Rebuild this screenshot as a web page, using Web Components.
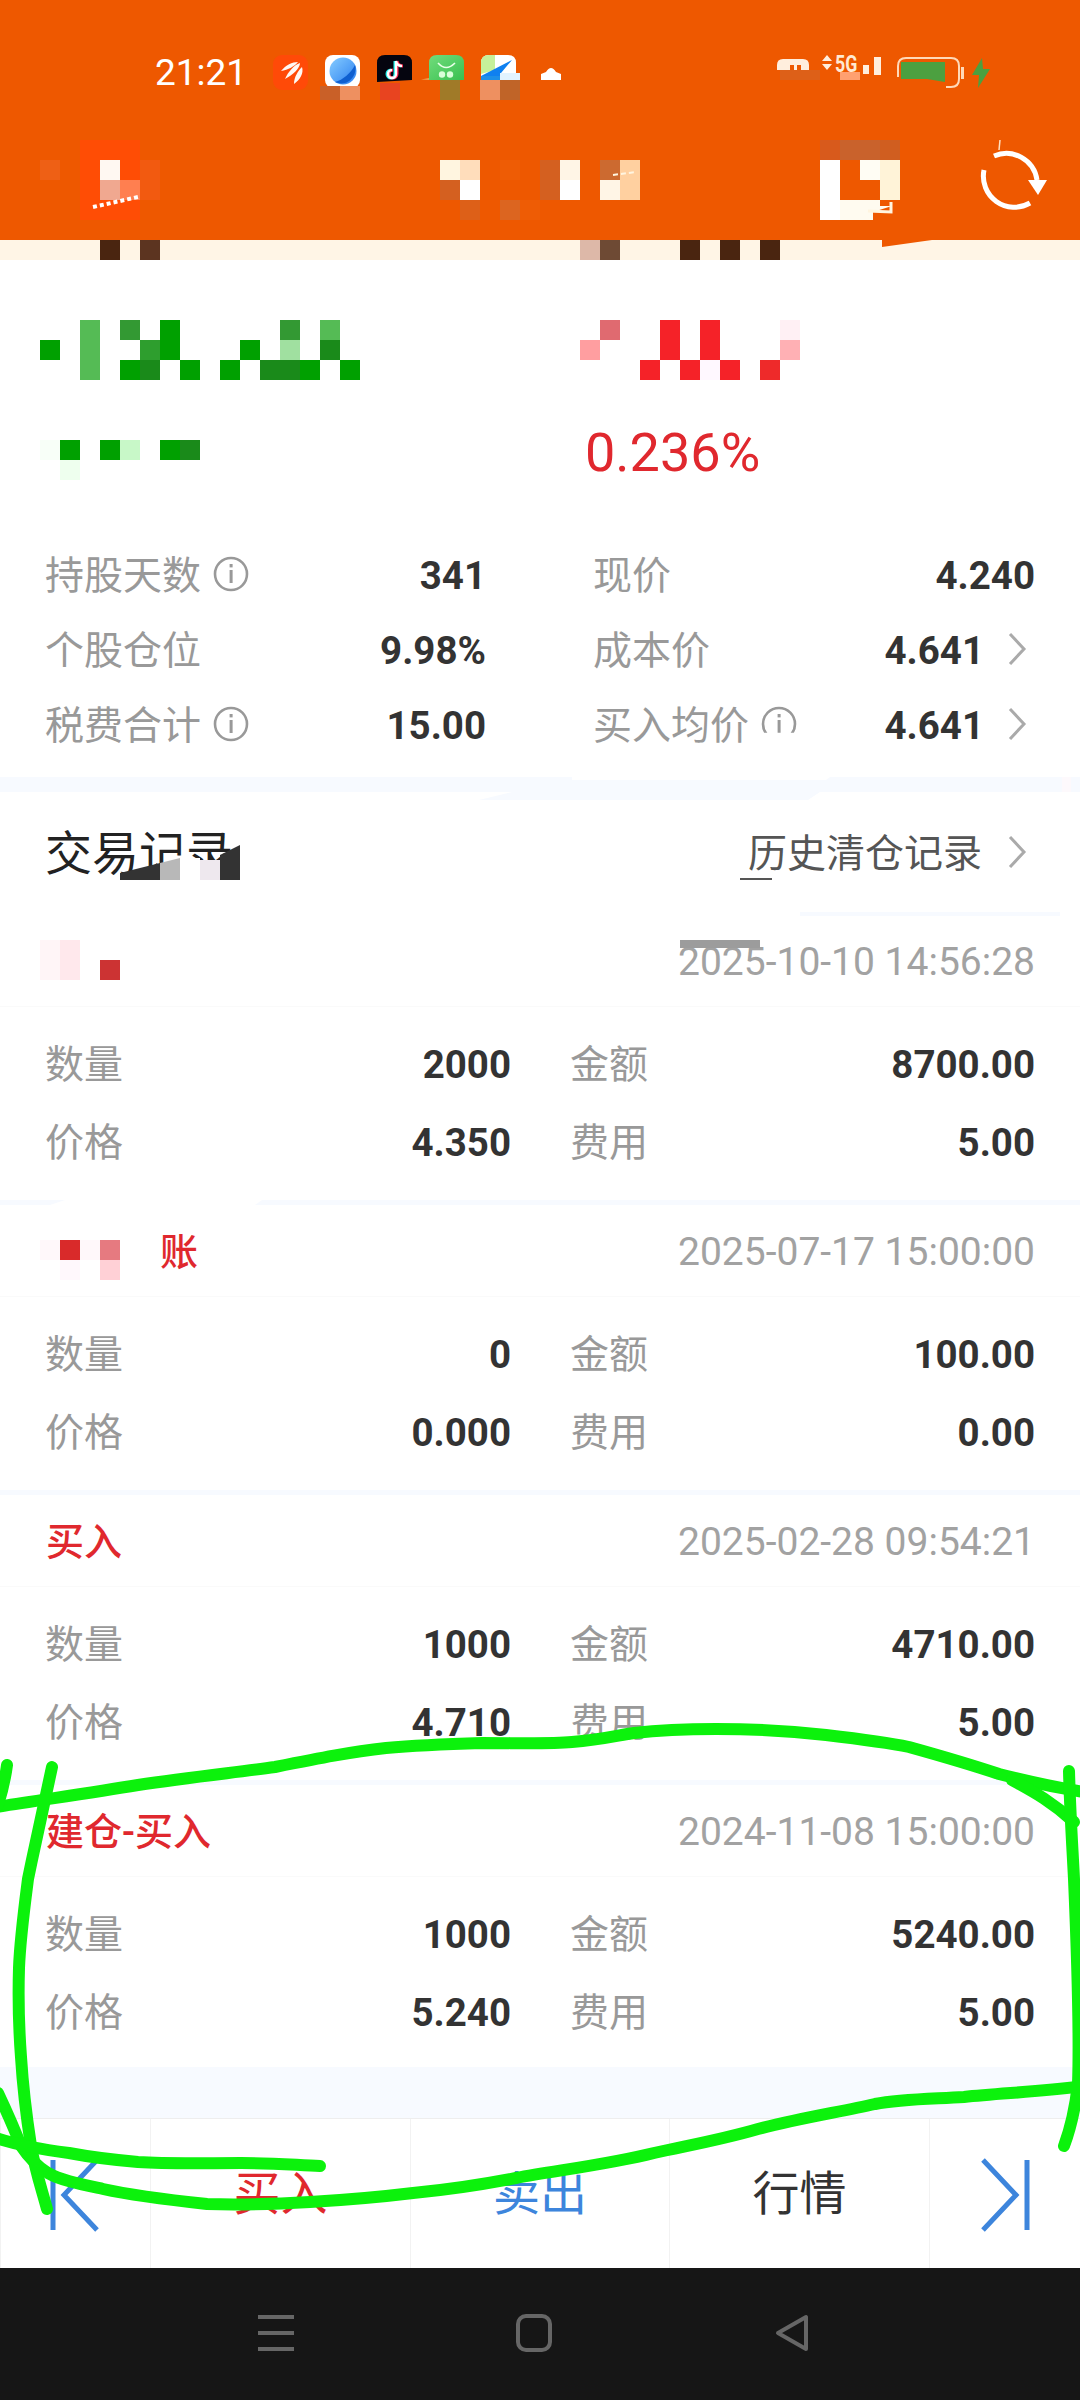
<!DOCTYPE html>
<html lang="zh-CN">
<head>
<meta charset="utf-8">
<title>持仓详情</title>
<style>
  html, body { margin: 0; padding: 0; }
  body {
    width: 1080px;
    height: 2400px;
    position: relative;
    overflow: hidden;
    display: flex;
    flex-direction: column;
    background: #f7faff;
    font-family: Roboto, "Noto Sans CJK SC", sans-serif;
  }
  .spacer { flex: 1; }
</style>
</head>
<body>
  <top-bar></top-bar>
  <holding-summary pct="0.236%">
    <stat-item label="持股天数" value="341" info></stat-item>
    <stat-item label="现价" value="4.240"></stat-item>
    <stat-item label="个股仓位" value="9.98%"></stat-item>
    <stat-item label="成本价" value="4.641" more></stat-item>
    <stat-item label="税费合计" value="15.00" info></stat-item>
    <stat-item label="买入均价" value="4.641" info="cut" more></stat-item>
  </holding-summary>
  <section-title link="历史清仓记录">交易记录</section-title>
  <trade-card date="2025-10-10 14:56:28" qty="2000" amount="8700.00" price="4.350" fee="5.00"></trade-card>
  <trade-card date="2025-07-17 15:00:00" qty="0" amount="100.00" price="0.000" fee="0.00" indent>账</trade-card>
  <trade-card date="2025-02-28 09:54:21" qty="1000" amount="4710.00" price="4.710" fee="5.00">买入</trade-card>
  <trade-card date="2024-11-08 15:00:00" qty="1000" amount="5240.00" price="5.240" fee="5.00" last>建仓-买入</trade-card>
  <div class="spacer"></div>
  <action-bar></action-bar>
  <system-nav></system-nav>
  <pixel-mosaic></pixel-mosaic>
  <pen-scribble></pen-scribble>

<script>
const CN = 'Roboto, "Noto Sans CJK SC", sans-serif';

class TopBar extends HTMLElement {
  constructor() {
    super();
    this.attachShadow({ mode: 'open' });
  }

  connectedCallback() {
    this.shadowRoot.innerHTML = `
      <style>
        :host { display: block; height: 260px; background: #fff5e6; flex: none; }
        .orange { height: 240px; background: #ee5800; display: flex; flex-direction: column; }
        .status { height: 140px; box-sizing: border-box; padding: 55px 90px 0 155px; display: flex; align-items: flex-start; }
        .time { width: 90px; margin-right: 28px; font: 400 37px/36px ${CN}; color: #fff; }
        .apps { display: flex; gap: 17px; align-items: flex-start; }
        .apps svg, .sys svg { display: block; flex: none; }
        .cloud { margin: 11px 0 0 8px; }
        .sys { margin-left: auto; display: flex; align-items: flex-start; }
        .five { display: block; font: 700 24px/18px ${CN}; color: #ffe9d2; width: 23px; margin: 0 5px 0 3px; transform: scaleX(.74); transform-origin: left; }
        .title { flex: 1; display: flex; justify-content: flex-end; padding-right: 23px; align-items: flex-start; }
      </style>
      <div class="orange">
        <div class="status">
          <div class="time">21:21</div>
          <div class="apps">
            <svg width="35" height="35" viewBox="0 0 35 35"><rect width="35" height="35" rx="9" fill="#ff4a08"/><path d="M8 16C13 10 19 7 25 7C22 11 15 15 8 16ZM12 24C15 17 21 10 27 8C27 13 20 20 12 24ZM21 29C21 22 25 16 29 12C31 18 27 25 21 29Z" fill="#fff8f4"/></svg>
            <svg width="35" height="33" viewBox="0 0 35 33"><defs><linearGradient id="pl" x1="0" y1="0" x2="1" y2="1"><stop offset="0" stop-color="#86ccff"/><stop offset="1" stop-color="#2a7ff0"/></linearGradient></defs><rect width="35" height="33" rx="8" fill="#fff"/><circle cx="18" cy="16" r="13.5" fill="url(#pl)"/><path d="M10 27C18 25 26 18 30 10C33 19 24 33 10 27Z" fill="#0f5fd0"/></svg>
            <svg width="35" height="27" viewBox="0 0 35 27"><path d="M8 0H27Q35 0 35 8V25L0 27V8Q0 0 8 0Z" fill="#05050f"/><path d="M19 6V19A4 4 0 1 1 15 15M19 6Q20 11 25 11" fill="none" stroke="#25f4ee" stroke-width="3" transform="translate(-1 0)"/><path d="M19 6V19A4 4 0 1 1 15 15M19 6Q20 11 25 11" fill="none" stroke="#fe2c55" stroke-width="3" transform="translate(1 0)"/><path d="M19 6V19A4 4 0 1 1 15 15M19 6Q20 11 25 11" fill="none" stroke="#fff" stroke-width="2.4"/></svg>
            <svg width="35" height="25" viewBox="0 0 35 25" style="overflow:visible"><defs><linearGradient id="gr" x1="0" y1="0" x2="1" y2="1"><stop offset="0" stop-color="#72dc7c"/><stop offset="1" stop-color="#38c050"/></linearGradient></defs><path d="M8 0H27Q35 0 35 8V25H0V8Q0 0 8 0Z" fill="url(#gr)"/><path d="M-8 24.6L0 23V25Z" fill="#f0a050"/><path d="M9 8Q17 17 26 8" fill="none" stroke="#e8ffe8" stroke-width="1.6"/><circle cx="13" cy="19.5" r="3.2" fill="#d8ffd8"/><circle cx="21" cy="19.5" r="3.2" fill="#d8ffd8"/></svg>
            <svg width="35" height="25" viewBox="0 0 35 25"><path d="M8 0H27Q35 0 35 8V25H0V8Q0 0 8 0Z" fill="#fff"/><path d="M0 8Q0 0 8 0H14V15L0 19Z" fill="#c6f09a"/><path d="M31 5L0 21V25H20V18Z" fill="#0f80f0"/><path d="M0 21H20V25H0Z" fill="#1c8fe8"/></svg>
            <svg class="cloud" width="20" height="14" viewBox="0 0 20 14"><path d="M0 14V8L5 6Q10 -2 15 6L20 8V14Z" fill="#fff"/></svg>
          </div>
          <div class="sys">
            <svg width="45" height="16" viewBox="0 0 45 16" style="margin-top:4px"><path d="M0 11V6Q0 0 6 0H26Q32 0 32 6V11H24V6H20V11H17V6H13V11Z" fill="#ffeedd"/></svg>
            <svg width="10" height="16" viewBox="0 0 10 16"><path d="M0 6L5 0L10 6ZM0 9H10L5 15Z" fill="#ffeedd"/></svg>
            <span class="five">5G</span>
            <svg width="34" height="20" viewBox="0 0 34 20" style="margin-top:2px"><rect y="8" width="6" height="9" fill="#ffeedd"/><rect x="11" width="7" height="18" fill="#ffeedd"/></svg>
            <svg width="75" height="32" viewBox="0 0 75 32" style="margin-top:2px"><path d="M1 20V9Q1 1 9 1H54Q62 1 62 9V22Q62 30 54 30H49" fill="none" stroke="#ffd9b8" stroke-width="2"/><path d="M4 5H48V25L30 22H4Z" fill="#4ca040"/><rect x="64" y="10" width="3" height="12" fill="#ffd9b8"/></svg>
            <svg width="18" height="30" viewBox="0 0 18 30" style="margin-top:3px"><path d="M10 0L0 17H7L6 30L18 11H11Z" fill="#4ca040"/></svg>
          </div>
        </div>
        <div class="title">
          <svg width="90" height="80" viewBox="0 0 90 80">
            <g fill="none" stroke="#fff" stroke-width="5">
              <path d="M27 16A31 31 0 0 1 70 40"/>
              <path d="M63 63A31 31 0 0 1 17 30"/>
            </g>
            <path d="M61 40H80L71 55Z" fill="#fff"/>
            <path d="M33 0L32 10" stroke="#ffe0c0" stroke-width="1.5"/>
          </svg>
        </div>
      </div>
    `;
  }
}

class HoldingSummary extends HTMLElement {
  constructor() {
    super();
    this.attachShadow({ mode: 'open' });
  }

  connectedCallback() {
    this.shadowRoot.innerHTML = `
      <style>
        :host { display: block; background: #fff; height: 517px; flex: none; border-bottom: 15px solid #f7faff; }
        .pct { height: 278px; box-sizing: border-box; padding: 163px 0 0 585px; font: 400 54px/60px ${CN}; color: #e0282e; }
        .grid { display: grid; grid-template-columns: 441px 442px; column-gap: 107px; padding: 0 45px; grid-auto-rows: 75px; }
      </style>
      <div class="pct">${this.getAttribute('pct')}</div>
      <div class="grid"><slot></slot></div>
    `;
  }
}

class StatItem extends HTMLElement {
  constructor() {
    super();
    this.attachShadow({ mode: 'open' });
  }

  connectedCallback() {
    const info = this.getAttribute('info');
    const cut = info === 'cut' ? 'clip-path: inset(0 0 24% 0);' : '';
    const infoIcon = info === null ? '' : `
      <svg class="info" style="${cut}" width="36" height="36" viewBox="0 0 36 36">
        <circle cx="18" cy="18" r="16" fill="none" stroke="#999" stroke-width="2.6"/>
        <rect x="16.6" y="8" width="3" height="3.4" fill="#999"/>
        <rect x="16.6" y="14" width="3" height="13" fill="#999"/>
      </svg>`;
    const more = this.hasAttribute('more') ? `
      <svg class="more" width="20" height="34" viewBox="0 0 20 34"><path d="M3 2L17 17L3 32" fill="none" stroke="#aaa" stroke-width="3"/></svg>` : '';
    this.shadowRoot.innerHTML = `
      <style>
        :host { display: flex; align-items: center; }
        .label { font: 400 39px/50px ${CN}; color: #999; }
        .info { margin-left: 12px; margin-top: -4px; }
        .value { margin-left: auto; font: 700 38.5px/50px ${CN}; color: #333; }
        .more { margin: -4px 8px 0 23px; }
      </style>
      <span class="label">${this.getAttribute('label')}</span>${infoIcon}
      <span class="value">${this.getAttribute('value')}</span>${more}
    `;
  }
}

class SectionTitle extends HTMLElement {
  constructor() {
    super();
    this.attachShadow({ mode: 'open' });
  }

  connectedCallback() {
    this.shadowRoot.innerHTML = `
      <style>
        :host { display: flex; align-items: center; flex: none; height: 123px; box-sizing: border-box; padding: 0 53px 0 45px; background: #fff; }
        .name { font: 400 47px/60px ${CN}; color: #222; }
        .link { margin-left: auto; font: 400 39px/50px ${CN}; color: #555; }
        svg { margin-left: 25px; margin-top: -4px; }
      </style>
      <span class="name"><slot></slot></span>
      <span class="link">${this.getAttribute('link')}</span>
      <svg width="20" height="34" viewBox="0 0 20 34"><path d="M3 2L17 17L3 32" fill="none" stroke="#aaa" stroke-width="3"/></svg>
    `;
  }
}

class TradeCard extends HTMLElement {
  constructor() {
    super();
    this.attachShadow({ mode: 'open' });
  }

  connectedCallback() {
    const attr = n => this.getAttribute(n);
    const last = this.hasAttribute('last');
    this.shadowRoot.innerHTML = `
      <style>
        :host { display: block; flex: none; background: #fff; height: ${last ? 282 : 285}px; ${last ? '' : 'border-bottom: 5px solid #f7faff;'} }
        .head { height: 89px; padding: 2px 45px 0 ${this.hasAttribute('indent') ? 160 : 46}px; display: flex; align-items: center; justify-content: space-between; border-bottom: 1px solid #fafafa; }
        .kind { font: 500 38px/50px ${CN}; color: #e0282e; }
        .date { font: 400 39px/50px ${CN}; color: #a2a2a2; }
        .rows { display: grid; grid-template-columns: 466px 465px; column-gap: 59px; grid-auto-rows: 78px; padding: 19px 45px 0; }
        .cell { display: flex; justify-content: space-between; align-items: center; }
        .cell span { font: 400 39px/50px ${CN}; color: #999; }
        .cell b { font: 700 38.5px/50px ${CN}; color: #333; }
      </style>
      <div class="head">
        <span class="kind"><slot></slot></span>
        <span class="date">${attr('date')}</span>
      </div>
      <div class="rows">
        <div class="cell"><span>数量</span><b>${attr('qty')}</b></div>
        <div class="cell"><span>金额</span><b>${attr('amount')}</b></div>
        <div class="cell"><span>价格</span><b>${attr('price')}</b></div>
        <div class="cell"><span>费用</span><b>${attr('fee')}</b></div>
      </div>
    `;
  }
}

class ActionBar extends HTMLElement {
  constructor() {
    super();
    this.attachShadow({ mode: 'open' });
  }

  connectedCallback() {
    this.shadowRoot.innerHTML = `
      <style>
        :host { display: grid; flex: none; grid-template-columns: 150px 260px 259px 260px 151px; height: 150px; box-sizing: border-box; background: #fff; border-top: 1px solid #eee; }
        div { display: flex; align-items: center; justify-content: center; font: 400 47px/60px ${CN}; border-left: 1px solid #f2f2f2; }
        div:first-child { border-left: 0; }
        .buy { color: #e0282e; }
        .sell { color: #3d85dc; }
        .quote { color: #333; }
        svg { margin-top: 2px; }
      </style>
      <div><svg width="52" height="74" viewBox="0 0 52 74"><path d="M3 2V72M47 2L14 37L47 72" fill="none" stroke="#3d85dc" stroke-width="5"/></svg></div>
      <div class="buy">买入</div>
      <div class="sell">卖出</div>
      <div class="quote">行情</div>
      <div><svg width="50" height="74" viewBox="0 0 50 74"><path d="M47 2V72M3 2L36 37L3 72" fill="none" stroke="#3d85dc" stroke-width="5"/></svg></div>
    `;
  }
}

class SystemNav extends HTMLElement {
  constructor() {
    super();
    this.attachShadow({ mode: 'open' });
  }

  connectedCallback() {
    this.shadowRoot.innerHTML = `
      <style>
        :host { display: flex; flex: none; height: 132px; background: #161616; justify-content: center; align-items: flex-start; gap: 222px; box-sizing: border-box; padding: 46px 12px 0 0; }
      </style>
      <svg width="36" height="38" viewBox="0 0 36 38"><path d="M0 3H36M0 19H36M0 35H36" stroke="#666" stroke-width="4"/></svg>
      <svg width="36" height="38" viewBox="0 0 36 38"><rect x="2" y="2" width="32" height="34" rx="8" fill="none" stroke="#666" stroke-width="4"/></svg>
      <svg width="36" height="38" viewBox="0 0 36 38"><path d="M32 3V35L4 19Z" fill="none" stroke="#666" stroke-width="4" stroke-linejoin="round"/></svg>
    `;
  }
}

// pixelated patches lying over the screenshot: [x, y, w, h, colour]
const CELLS = [
  // status bar
  [320, 86, 20, 14, '#c96028'], [340, 86, 20, 14, '#ee9060'], [380, 83, 20, 17, '#e84420'],
  [440, 80, 20, 20, '#a07a28'], [500, 73, 20, 7, '#e2f3ff'], [480, 80, 20, 20, '#ee9060'], [500, 80, 20, 20, '#c06428'],
  [780, 70, 40, 10, '#dd6018'], [840, 72, 20, 8, '#ffa070'],
  // header
  [80, 140, 60, 80, '#ff4d05'], [100, 160, 20, 20, '#fff8f2'], [100, 180, 20, 20, '#f0a890'], [120, 180, 20, 20, '#ff7f50'],
  [140, 160, 20, 40, '#f25a10'], [40, 160, 20, 20, '#ee6015'],
  [440, 160, 20, 20, '#fff5e0'], [460, 160, 20, 20, '#ffddbb'], [500, 160, 20, 20, '#ee5c05'], [540, 160, 20, 20, '#d46020'], [560, 160, 20, 20, '#fff5e6'],
  [600, 160, 20, 20, '#cc6a30'], [620, 160, 20, 20, '#ffd0a0'],
  [440, 180, 20, 20, '#d46020'], [460, 180, 20, 20, '#fff'], [540, 180, 20, 20, '#d46020'], [560, 180, 20, 20, '#fff'],
  [600, 180, 20, 20, '#fff5e6'], [620, 180, 20, 20, '#ffd0a0'],
  [460, 200, 20, 20, '#dd6018'], [500, 200, 20, 20, '#dc6520'], [520, 200, 20, 20, '#ee5c05'],
  [820, 140, 20, 20, '#d85a1c'], [840, 140, 40, 20, '#c9622c'], [880, 140, 20, 20, '#d05e20'],
  [820, 160, 20, 60, '#fff'], [860, 160, 20, 20, '#fffdf4'], [880, 160, 20, 40, '#fff3d8'],
  // cream strip
  [100, 240, 20, 20, '#4a2510'], [140, 240, 20, 20, '#5c3420'], [580, 240, 20, 20, '#ddb8a8'], [600, 240, 20, 20, '#6e4a34'],
  [680, 240, 20, 20, '#4a2510'], [720, 240, 20, 20, '#4a2510'], [760, 240, 20, 20, '#4a2510'],
  // green amount
  [80, 320, 20, 60, '#55bb55'], [120, 320, 20, 20, '#339933'], [160, 320, 20, 40, '#00a000'], [280, 320, 20, 20, '#339933'], [320, 320, 20, 20, '#55bb55'],
  [40, 340, 20, 20, '#00a000'], [140, 340, 20, 20, '#2e9e2e'], [240, 340, 20, 20, '#00a000'], [280, 340, 20, 20, '#a0e0a0'], [320, 340, 20, 20, '#1a8a1a'],
  [120, 360, 20, 20, '#00a000'], [140, 360, 20, 20, '#1a8a1a'], [180, 360, 20, 20, '#00a000'], [220, 360, 20, 20, '#00a000'],
  [260, 360, 40, 20, '#1a8a1a'], [300, 360, 20, 20, '#00a000'], [340, 360, 20, 20, '#00a000'],
  [40, 440, 20, 20, '#f8fff8'], [60, 440, 20, 20, '#00a000'], [100, 440, 20, 20, '#00a000'], [120, 440, 20, 20, '#c8f8c8'],
  [160, 440, 20, 20, '#00a000'], [180, 440, 20, 20, '#1a8a1a'], [60, 460, 20, 20, '#eeffee'],
  // red amount
  [600, 320, 20, 20, '#e06a70'], [660, 320, 20, 40, '#f52228'], [700, 320, 20, 40, '#f52228'], [780, 320, 20, 20, '#fff0f4'],
  [580, 340, 20, 20, '#ff9ea0'], [780, 340, 20, 20, '#ffb0b4'],
  [640, 360, 20, 20, '#f52228'], [680, 360, 20, 20, '#f52228'], [700, 360, 20, 20, '#fff8ff'], [720, 360, 20, 20, '#f52228'], [760, 360, 20, 20, '#ee2a2a'],
  // section title and card labels
  [180, 858, 20, 22, '#fff'], [200, 860, 20, 20, '#eee8ee'], [740, 878, 32, 2, '#555'],
  [800, 912, 260, 4, '#f7faff'],
  [680, 940, 80, 8, '#9c9c9c'],
  [40, 940, 20, 40, '#fff5f7'], [60, 940, 20, 40, '#ffe8ec'], [100, 960, 20, 20, '#cc3333'],
  [40, 1240, 20, 20, '#fff8fa'], [60, 1240, 20, 20, '#d92a2a'], [80, 1240, 20, 20, '#fff8fa'], [100, 1240, 20, 20, '#e67a80'],
  [60, 1260, 20, 20, '#fff8fc'], [100, 1260, 20, 20, '#ffd0d6']
];

const SHAPES = `
  <polygon points="882,240 932,240 882,247" fill="#ee5800"/>
  <polygon points="840,200 880,200 880,206 892,206 873,212 873,220 840,220" fill="#fffbf0"/>
  <path d="M868 211L891 212V202" fill="none" stroke="#fff5e0" stroke-width="3"/>
  <path d="M93 207L138 197" stroke="#fff" stroke-width="4" stroke-dasharray="4 3"/>
  <path d="M613 175L636 172" stroke="#fff5e0" stroke-width="2" stroke-dasharray="5 3"/>
  <polygon points="120,880 120,873 160,863 160,880" fill="#333"/>
  <polygon points="160,880 160,863 180,858 180,880" fill="#b8b8b8"/>
  <polygon points="220,880 220,855 240,845 240,880" fill="#333"/>
  <polygon points="572,777 830,777 826,780 572,780" fill="#fff"/>
  <polygon points="512,792 820,792 808,800 479,800" fill="#f7faff"/>
  <rect x="1062" y="777" width="9" height="15" fill="#fdf9fc"/>
  <polygon points="65,1200 262,1200 255,1205 50,1205" fill="#fff"/>
`;

class PixelMosaic extends HTMLElement {
  constructor() {
    super();
    this.attachShadow({ mode: 'open' });
  }

  connectedCallback() {
    const rects = CELLS.map(([x, y, w, h, c]) => `<rect x="${x}" y="${y}" width="${w}" height="${h}" fill="${c}"/>`).join('');
    this.shadowRoot.innerHTML = `
      <style>
        :host { position: absolute; left: 0; top: 0; width: 1080px; height: 2400px; pointer-events: none; }
        svg { display: block; }
      </style>
      <svg width="1080" height="2400" viewBox="0 0 1080 2400">
        <g shape-rendering="crispEdges">${rects}</g>
        ${SHAPES}
      </svg>
    `;
  }
}

class PenScribble extends HTMLElement {
  constructor() {
    super();
    this.attachShadow({ mode: 'open' });
  }

  connectedCallback() {
    this.shadowRoot.innerHTML = `
      <style>
        :host { position: absolute; left: 0; top: 0; width: 1080px; height: 2400px; pointer-events: none; }
        svg { display: block; }
      </style>
      <svg width="1080" height="2400" viewBox="0 0 1080 2400" fill="none" stroke="#0cf20c" stroke-width="12" stroke-linecap="round" stroke-linejoin="round">
        <path d="M-4 1807C40 1800 90 1793 138 1785C190 1777 240 1772 275 1767C320 1758 350 1752 386 1748C420 1745 450 1744 482 1743C520 1743 550 1744 572 1742C600 1740 615 1736 634 1733C660 1730 690 1729 716 1729C760 1729 800 1732 826 1735C860 1739 885 1742 909 1747C945 1757 975 1766 999 1774C1030 1782 1060 1788 1084 1792"/>
        <path d="M1012 1780C1030 1790 1050 1800 1074 1822"/>
        <path d="M1069 1771C1070 1810 1072 1840 1074 1879C1077 1950 1080 2030 1078 2084C1075 2110 1070 2130 1064 2146"/>
        <path d="M1084 2086C1040 2092 1000 2093 964 2097C930 2099 900 2099 875 2104C840 2112 800 2118 758 2129C720 2140 690 2145 654 2153C610 2164 560 2170 516 2178C480 2185 445 2190 413 2193C380 2197 345 2200 310 2202C275 2204 240 2205 207 2204C170 2200 135 2196 103 2189C80 2184 60 2180 48 2173C35 2165 27 2155 21 2146C14 2128 6 2110 -2 2093"/>
        <path d="M52 1767C45 1800 36 1840 28 1879C24 1910 20 1940 19 1968C18 2000 19 2030 21 2057C23 2090 27 2120 31 2146C35 2170 42 2190 47 2209"/>
        <path d="M-4 2138C20 2146 45 2150 69 2153C90 2157 115 2160 138 2162C170 2164 205 2163 241 2163C270 2163 295 2165 320 2166"/>
        <path d="M7 1765C5 1780 2 1792 -2 1805"/>
      </svg>
    `;
  }
}

customElements.define('top-bar', TopBar);
customElements.define('holding-summary', HoldingSummary);
customElements.define('stat-item', StatItem);
customElements.define('section-title', SectionTitle);
customElements.define('trade-card', TradeCard);
customElements.define('action-bar', ActionBar);
customElements.define('system-nav', SystemNav);
customElements.define('pixel-mosaic', PixelMosaic);
customElements.define('pen-scribble', PenScribble);
</script>
</body>
</html>
